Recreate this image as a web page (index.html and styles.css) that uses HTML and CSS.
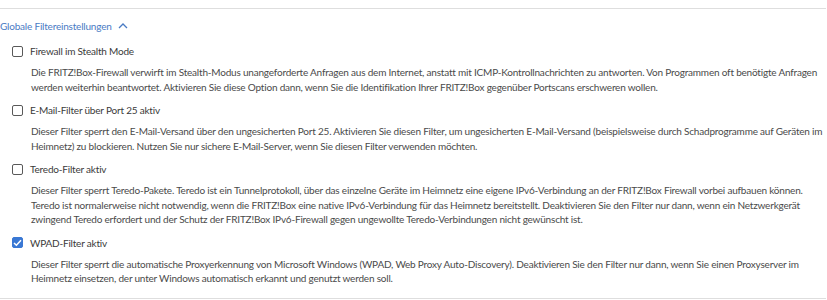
FILE: index.html
```html
<!DOCTYPE html>
<html lang="de">
<head>
    <meta charset="UTF-8">
    <title>Filter</title>
    <link rel="stylesheet" href="styles.css">
</head>
<body>
    <div class="group">
        <!-- Header -->
        <div class="group-head">
            <span>Globale Filtereinstellungen</span>
            <svg class="chevron" width="10" height="7" viewBox="0 0 10 7"><path d="M1 6 L5 2 L9 6" fill="none" stroke="#4a7bc4" stroke-width="1.3"/></svg>
        </div>

        <div class="option">
            <label class="option-label"><span class="box"></span>Firewall im Stealth Mode</label>
            <p class="option-desc">Die FRITZ!Box-Firewall verwirft im Stealth-Modus unangeforderte Anfragen aus dem Internet, anstatt mit ICMP-Kontrollnachrichten zu antworten. Von Programmen oft benötigte Anfragen werden weiterhin beantwortet. Aktivieren Sie diese Option dann, wenn Sie die Identifikation Ihrer FRITZ!Box gegenüber Portscans erschweren wollen.</p>
        </div>

        <div class="option">
            <label class="option-label"><span class="box"></span>E-Mail-Filter über Port 25 aktiv</label>
            <p class="option-desc">Dieser Filter sperrt den E-Mail-Versand über den ungesicherten Port 25. Aktivieren Sie diesen Filter, um ungesicherten E-Mail-Versand (beispielsweise durch Schadprogramme auf Geräten im Heimnetz) zu blockieren. Nutzen Sie nur sichere E-Mail-Server, wenn Sie diesen Filter verwenden möchten.</p>
        </div>

        <div class="option">
            <label class="option-label"><span class="box"></span>Teredo-Filter aktiv</label>
            <p class="option-desc">Dieser Filter sperrt Teredo-Pakete. Teredo ist ein Tunnelprotokoll, über das einzelne Geräte im Heimnetz eine eigene IPv6-Verbindung an der FRITZ!Box Firewall vorbei aufbauen können. Teredo ist normalerweise nicht notwendig, wenn die FRITZ!Box eine native IPv6-Verbindung für das Heimnetz bereitstellt. Deaktivieren Sie den Filter nur dann, wenn ein Netzwerkgerät zwingend Teredo erfordert und der Schutz der FRITZ!Box IPv6-Firewall gegen ungewollte Teredo-Verbindungen nicht gewünscht ist.</p>
        </div>

        <div class="option">
            <label class="option-label"><span class="box checked"><svg width="9" height="8" viewBox="0 0 9 8"><path d="M1 4 L3.4 6.3 L8 1.3" fill="none" stroke="#fff" stroke-width="1.5"/></svg></span>WPAD-Filter aktiv</label>
            <p class="option-desc">Dieser Filter sperrt die automatische Proxyerkennung von Microsoft Windows (WPAD, Web Proxy Auto-Discovery). Deaktivieren Sie den Filter nur dann, wenn Sie einen Proxyserver im Heimnetz einsetzen, der unter Windows automatisch erkannt und genutzt werden soll.</p>
        </div>
    </div>
</body>
</html>
```

FILE: styles.css
```css
body {
    margin: 0;
    padding-top: 8px;
    font-family: Lato, "Open Sans", sans-serif;
    font-size: 10px;
    letter-spacing: -0.2px;
    color: #4a4a4a;
    background: #fff;
}
.group {
    border-top: 1px solid #dedede;
    border-bottom: 1px solid #dedede;
    width: 826px;
    padding-bottom: 12px;
}
.group-head {
    display: flex;
    align-items: center;
    gap: 6px;
    margin-top: 10px;
    margin-bottom: 11px;
    height: 14px;
    color: #4a7bc4;
}
.chevron {
    margin-top: -1px;
}
.option {
    padding-left: 12px;
    margin-bottom: 9px;
}
.option:last-child {
    margin-bottom: 0;
}
.option-label {
    display: flex;
    align-items: center;
    gap: 7px;
    height: 14px;
    color: #3a3a3a;
}
.box {
    width: 9px;
    height: 9px;
    border: 1.5px solid #595959;
    border-radius: 2px;
    display: flex;
    align-items: center;
    justify-content: center;
}
.box.checked {
    background: #3a78d4;
    border-color: #3a78d4;
}
.option-desc {
    margin: 7px 0 0 19px;
    line-height: 14.5px;
}
```
